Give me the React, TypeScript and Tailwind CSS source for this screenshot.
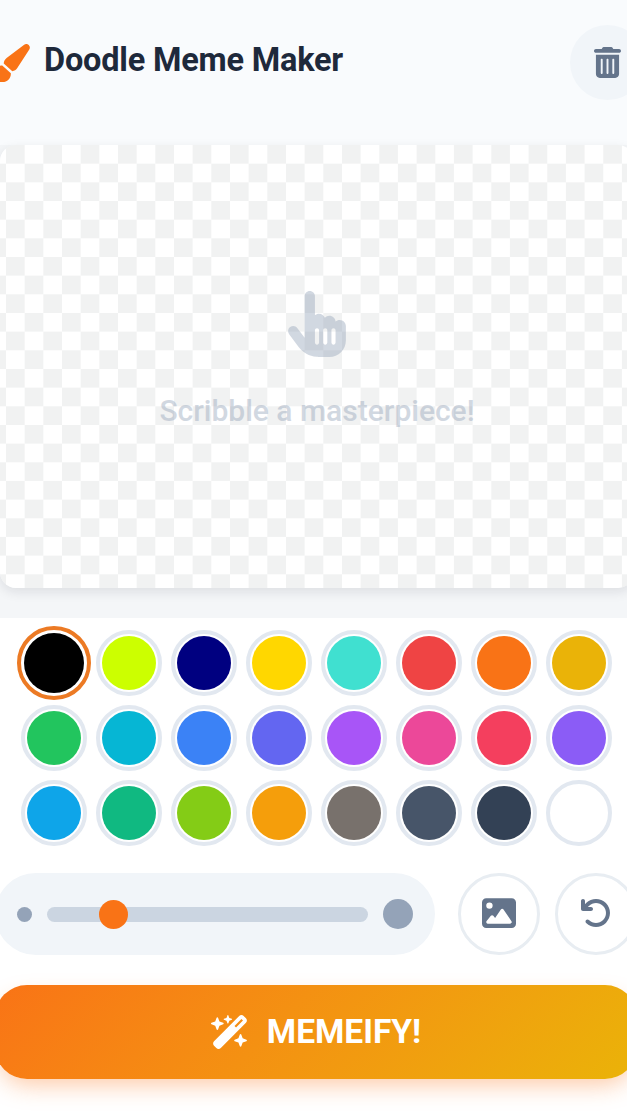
import React from "react";
import {
  FaPaintbrush,
  FaTrashCan,
  FaHandPointer,
  FaImage,
  FaArrowRotateLeft,
  FaWandMagicSparkles,
} from "react-icons/fa6";

const colors = [
  "#000000", "#ccff00", "#000080", "#ffd700", "#40e0d0", "#ef4444", "#f97316", "#eab308",
  "#22c55e", "#06b6d4", "#3b82f6", "#6366f1", "#a855f7", "#ec4899", "#f43f5e", "#8b5cf6",
  "#0ea5e9", "#10b981", "#84cc16", "#f59e0b", "#78716c", "#475569", "#334155", "#ffffff",
];

export default function App() {
  return (
    <div className="w-[627px] h-[1115px] overflow-hidden flex flex-col bg-white font-['Roboto',sans-serif]">
      <header className="h-[145px] shrink-0 bg-[#f9fbfd]">
        <div className="w-[658px] -ml-[13px] pt-[25px] flex items-center justify-between">
          <div className="flex items-center gap-[15px] -mt-[5px]">
            <FaPaintbrush className="w-[43px] h-[38px] text-[#f97316] mt-[5px]" />
            <h1 className="text-[32.5px] leading-[38px] tracking-[-0.2px] font-bold text-[#1e293b] -ml-[1px]">Doodle Meme Maker</h1>
          </div>
          <button className="w-[75px] h-[75px] rounded-full bg-[#f1f5f9] flex items-center justify-center">
            <FaTrashCan className="w-[27px] h-[31px] text-[#64748b]" />
          </button>
        </div>
      </header>

      <main className="shrink-0 bg-[#f4f6f8] pb-[30px]">
        <div className="w-[634px] h-[443px] rounded-2xl shadow-[0_4px_12px_rgba(15,23,42,0.1)] bg-[conic-gradient(#f1f2f2_25%,#ffffff_0_50%,#f1f2f2_0_75%,#ffffff_0)] bg-size-[37.33px_37.33px] bg-position-[-12.67px_0px] flex flex-col items-center pt-[146px]">
          <div className="flex flex-col items-center opacity-[0.42] text-[#94a3b8]">
            <FaHandPointer className="w-[58px] h-[66px]" />
            <p className="mt-[36px] text-[30px] leading-[36px] font-medium">Scribble a masterpiece!</p>
          </div>
        </div>
      </main>

      <section className="flex-1 bg-white pt-[12px]">
        <div className="grid grid-cols-[repeat(8,66px)] auto-rows-[66px] gap-[9px] ml-[21px]">
          {colors.map((c, i) => (
            <div key={c} className="flex items-center justify-center">
              {i === 0 ? (
                <button className="w-[74px] h-[74px] shrink-0 rounded-full border-[4px] border-[#ec7a24] p-[3px] bg-white">
                  <span className="block w-full h-full rounded-full" style={{ backgroundColor: c }} />
                </button>
              ) : (
                <button className="w-[66px] h-[66px] shrink-0 rounded-full border-[4px] border-[#e2e8f0] p-[2px] bg-white">
                  <span className="block w-full h-full rounded-full" style={{ backgroundColor: c }} />
                </button>
              )}
            </div>
          ))}
        </div>

        <div className="w-[650px] -ml-[5px] mt-[27px] flex items-center gap-[15px]">
          <div className="relative w-[440px] h-[82px] shrink-0 rounded-full bg-[#f1f5f9] flex items-center pl-[22px] pr-[22px] gap-[15px]">
            <span className="w-[15px] h-[15px] shrink-0 rounded-full bg-[#94a3b8]" />
            <div className="relative flex-1 h-[15px] rounded-full bg-[#cbd5e1]">
              <span className="absolute left-[52px] -top-[7px] w-[29px] h-[29px] rounded-full bg-[#f97316]" />
            </div>
            <span className="w-[30px] h-[30px] shrink-0 rounded-full bg-[#94a3b8]" />
          </div>
          <button className="ml-[8px] w-[82px] h-[82px] shrink-0 rounded-full bg-white border-[3px] border-[#e8edf2] flex items-center justify-center">
            <FaImage className="w-[34px] h-[34px] text-[#64748b] mb-[3px]" />
          </button>
          <button className="w-[82px] h-[82px] shrink-0 rounded-full bg-white border-[3px] border-[#e8edf2] flex items-center justify-center">
            <FaArrowRotateLeft className="w-[32px] h-[32px] text-[#64748b] mb-[3px]" />
          </button>
        </div>

        <button className="w-[642px] h-[94px] -ml-[5px] mt-[30px] rounded-[32px] bg-linear-135 from-[#f97316] to-[#eab308] shadow-[0_10px_25px_-5px_rgba(249,115,22,0.4)] flex items-center justify-center gap-[18px] text-white">
          <FaWandMagicSparkles className="w-[38px] h-[34px]" />
          <span className="text-[33.5px] leading-[38px] font-bold">MEMEIFY!</span>
        </button>
      </section>
    </div>
  );
}
